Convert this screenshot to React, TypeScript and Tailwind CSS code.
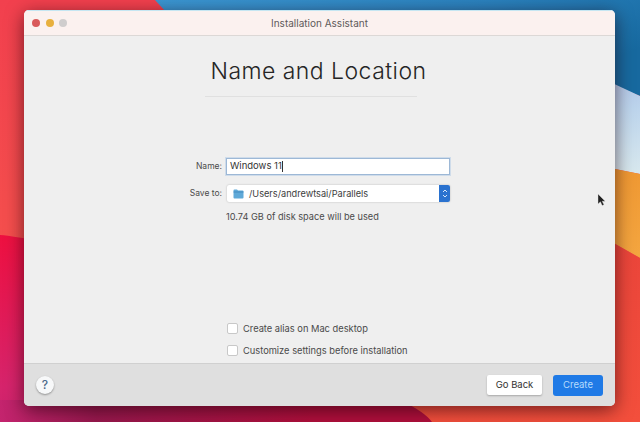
import React from "react";

function Wallpaper() {
  return (
    <svg className="absolute inset-0" width="640" height="422" viewBox="0 0 640 422">
      <defs>
        <linearGradient id="blue" x1="0" y1="0" x2="1" y2="0.5">
          <stop offset="0" stopColor="#3b97d3" />
          <stop offset="0.55" stopColor="#2a82bf" />
          <stop offset="1" stopColor="#17699f" />
        </linearGradient>
        <linearGradient id="left" x1="0" y1="0" x2="0" y2="1">
          <stop offset="0" stopColor="#f2404e" />
          <stop offset="1" stopColor="#f65a4c" />
        </linearGradient>
        <linearGradient id="crim" x1="0" y1="0" x2="0.6" y2="1">
          <stop offset="0" stopColor="#ee1040" />
          <stop offset="0.6" stopColor="#d6246c" />
          <stop offset="1" stopColor="#b51f6a" />
        </linearGradient>
        <linearGradient id="bottom" x1="0" y1="0" x2="1" y2="0">
          <stop offset="0" stopColor="#c4246e" />
          <stop offset="0.2" stopColor="#98184e" />
          <stop offset="0.65" stopColor="#b00f3c" />
          <stop offset="1" stopColor="#b00f3c" />
        </linearGradient>
        <linearGradient id="lav" x1="0" y1="0" x2="0" y2="1">
          <stop offset="0" stopColor="#a6b4e2" />
          <stop offset="0.5" stopColor="#bcd4ec" />
          <stop offset="1" stopColor="#d8e8ee" />
        </linearGradient>
        <linearGradient id="orange" x1="0" y1="0" x2="0" y2="1">
          <stop offset="0" stopColor="#ee9530" />
          <stop offset="1" stopColor="#f4a640" />
        </linearGradient>
        <linearGradient id="red" x1="0" y1="0" x2="0" y2="1">
          <stop offset="0" stopColor="#e8423a" />
          <stop offset="1" stopColor="#f34f3c" />
        </linearGradient>
      </defs>
      <rect width="640" height="422" fill="url(#left)" />
      <path d="M0 235 C60 240 300 300 640 422 L0 422Z" fill="url(#crim)" />
      <rect x="0" y="400" width="480" height="22" fill="url(#bottom)" />
      <path d="M155 0 H640 V96 L500 40 L166 12Z" fill="url(#blue)" />
      <path d="M520 40 L640 96 V174 L520 150Z" fill="url(#lav)" />
      <path d="M520 150 L640 174 V258 L520 190Z" fill="url(#orange)" />
      <path d="M520 190 L640 258 V422 H432 Q425 412 400 400 L520 300Z" fill="url(#red)" />
    </svg>
  );
}

function Check({ label }: { label: string }) {
  return (
    <div className="flex items-center gap-[5px] h-[11px]">
      <span className="w-[11px] h-[11px] bg-white border border-[#c8c8c8] rounded-[2px] shrink-0" />
      <span className="text-[9.3px] text-[#4a4a4a] whitespace-nowrap">{label}</span>
    </div>
  );
}

export default function App() {
  return (
    <div className="relative w-[640px] h-[422px] overflow-hidden font-['Inter','Liberation_Sans',sans-serif]">
      <Wallpaper />
      <div className="relative pt-[10px] pl-[24px]">
        <div className="w-[591px] h-[396px] rounded-[5px] overflow-hidden flex flex-col bg-[#efefef] shadow-[0_4px_18px_rgba(30,0,10,0.6)]">
          <div className="relative h-[26px] shrink-0 bg-[#fbf1ef] border-b border-[#dcd8d6] flex items-center justify-center border-t border-t-[#c5e6f2]">
            <div className="absolute left-[8px] top-[8px] flex gap-[5.5px]">
              <span className="w-[8px] h-[8px] rounded-full bg-[#d9595a]" />
              <span className="w-[8px] h-[8px] rounded-full bg-[#e8b03e]" />
              <span className="w-[8px] h-[8px] rounded-full bg-[#cfcdcd]" />
            </div>
            <span className="text-[10px] text-[#5e5a5a]">Installation Assistant</span>
          </div>

          <div className="flex-1 flex flex-col items-center min-h-0">
            <h1 className="mt-[20px] pr-[2px] text-[23px] leading-[30px] font-light tracking-[0.02em] text-[#262626]">
              Name and Location
            </h1>
            <div className="mt-[10px] self-start ml-[181px] w-[212px] h-px bg-[#e0e0e0]" />

            <div className="mt-[61px] self-start pl-[159px] flex flex-col">
              <div className="flex items-center h-[17px]">
                <span className="w-[39px] text-right text-[8.5px] text-[#4a4a4a]">Name:</span>
                <div className="ml-[4px] w-[224px] h-[17px] bg-white border border-[#9db8d6] shadow-[0_0_0_1px_rgba(150,185,225,0.35)] flex items-center pl-[3px] text-[9.5px] text-[#333]">
                  Windows 11
                  <span className="w-px h-[11px] bg-[#333]" />
                </div>
              </div>
              <div className="flex items-center h-[17px] mt-[10px]">
                <span className="w-[39px] text-right text-[8.5px] text-[#4a4a4a]">Save to:</span>
                <div className="ml-[5px] w-[223px] h-[17px] bg-white rounded-[2px] shadow-[0_0_2px_rgba(0,0,0,0.25)] flex items-center relative">
                  <svg className="ml-[6px]" width="11" height="10" viewBox="0 0 11 10">
                    <path d="M0.5 1.5 Q0.5 0.5 1.5 0.5 H4 L5 1.5 H9.5 Q10.5 1.5 10.5 2.5 V8.5 Q10.5 9.5 9.5 9.5 H1.5 Q0.5 9.5 0.5 8.5Z" fill="#5fa9d8" />
                    <rect x="0.5" y="2.6" width="10" height="0.8" fill="#3d86bb" />
                  </svg>
                  <span className="ml-[5px] text-[9.2px] text-[#3c3c3c]">/Users/andrewtsai/Parallels</span>
                  <div className="absolute right-0 top-0 w-[11px] h-[17px] bg-[#2a72cf] rounded-r-[2px] flex items-center justify-center">
                    <svg width="6" height="11" viewBox="0 0 6 11" fill="none" stroke="#d5e6fa" strokeWidth="1">
                      <path d="M1 4 L3 2 L5 4" />
                      <path d="M1 7 L3 9 L5 7" />
                    </svg>
                  </div>
                </div>
              </div>
              <span className="ml-[43px] mt-[9px] text-[9.2px] leading-[11px] text-[#4a4a4a]">
                10.74 GB of disk space will be used
              </span>
            </div>

            <div className="mt-auto mb-[7px] self-start pl-[203px] flex flex-col gap-[11px]">
              <Check label="Create alias on Mac desktop" />
              <Check label="Customize settings before installation" />
            </div>
          </div>

          <div className="h-[43px] shrink-0 bg-[#dfdfdf] border-t border-[#d0d0d0] flex items-center px-[12px]">
            <div className="w-[18px] h-[18px] rounded-full bg-[#f7f8f9] shadow-[0_1px_2px_rgba(0,0,0,0.35)] flex items-center justify-center text-[12px] font-medium text-[#4d6a8a]">
              ?
            </div>
            <div className="ml-auto flex gap-[11px] items-center">
              <div className="w-[55px] h-[20px] bg-white rounded-[2px] shadow-[0_1px_2px_rgba(0,0,0,0.25)] flex items-center justify-center text-[9.5px] text-[#333]">
                Go Back
              </div>
              <div className="w-[50px] h-[21px] bg-[#1f7ae6] rounded-[3px] flex items-center justify-center text-[9.5px] text-[#b6dafc]">
                Create
              </div>
            </div>
          </div>
        </div>
      </div>
      <svg className="absolute left-[597px] top-[193px]" width="10" height="14" viewBox="0 0 10 14">
        <path d="M1 1 V11 L3.4 8.8 L5.2 12.6 L7 11.8 L5.2 8.2 H8.2Z" fill="#222" stroke="#ddd" strokeWidth="0.4" />
      </svg>
    </div>
  );
}
